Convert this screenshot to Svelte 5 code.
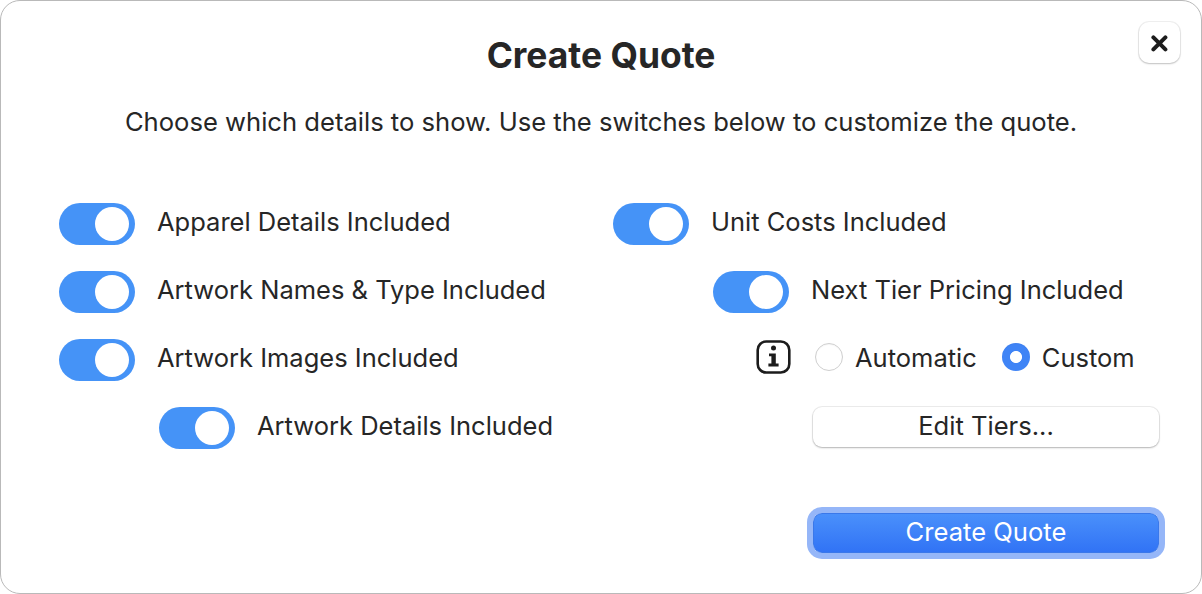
<script>
  const left = [
    { label: "Apparel Details Included" },
    { label: "Artwork Names & Type Included" },
    { label: "Artwork Images Included" },
    { label: "Artwork Details Included", nested: true },
  ];
</script>

{#snippet toggle(label, nested)}
  <div class="row" class:nested>
    <span class="switch"><span class="knob"></span></span>
    <span class="label">{label}</span>
  </div>
{/snippet}

<div class="dialog">
  <button class="close" aria-label="Close">
    <svg width="18" height="18" viewBox="0 0 18 18">
      <path d="M2.4 3.4L14.4 15.4M14.4 3.4L2.4 15.4" stroke="#1c1c1c" stroke-width="4" stroke-linecap="round" />
    </svg>
  </button>

  <h1>Create Quote</h1>
  <p class="intro">Choose which details to show. Use the switches below to customize the quote.</p>

  <div class="columns">
    <div class="col">
      {#each left as item}
        {@render toggle(item.label, item.nested)}
      {/each}
    </div>

    <div class="col">
      {@render toggle("Unit Costs Included", false)}
      {@render toggle("Next Tier Pricing Included", true)}
      <div class="row radios">
        <svg class="info" width="36" height="36" viewBox="0 0 36 36">
          <rect x="1.7" y="2.5" width="31.6" height="31" rx="8.5" fill="none" stroke="#1c1c1c" stroke-width="2.6" />
          <circle cx="17.5" cy="9" r="2.5" fill="#1c1c1c" />
          <path d="M13 14.4H19.8V24.6H22.6V27.4H12.4V24.6H15.4V17.2H13Z" fill="#1c1c1c" />
        </svg>
        <span class="radio"></span>
        <span class="label">Automatic</span>
        <span class="radio on"></span>
        <span class="label">Custom</span>
      </div>
      <div class="row tiers">
        <button class="edit">Edit Tiers...</button>
      </div>
    </div>
  </div>

  <div class="footer">
    <button class="primary">Create Quote</button>
  </div>
</div>

<style>
  :global(body) {
    margin: 0;
    background: #fff;
  }

  .dialog {
    position: relative;
    box-sizing: border-box;
    width: 1202px;
    height: 594px;
    padding: 0 42px 0 59px;
    background: #fff;
    border: 1px solid #b9b9b9;
    border-radius: 20px;
    font-family: Inter, sans-serif;
    color: #262626;
    display: flex;
    flex-direction: column;
  }

  h1 {
    margin: 33px 0 0 -17px;
    font-size: 35.4px;
    line-height: 44px;
    font-weight: 700;
    text-align: center;
  }

  .intro {
    margin: 27px 0 0 -17px;
    font-size: 25.6px;
    line-height: 34px;
    text-align: center;
  }

  .close {
    position: absolute;
    top: 21px;
    right: 21px;
    width: 41px;
    height: 41px;
    padding: 0;
    border: none;
    border-radius: 10px;
    background: #fff;
    box-shadow: 0 0 0 1px rgba(0, 0, 0, 0.06), 0 1px 2px rgba(0, 0, 0, 0.2);
    display: flex;
    align-items: center;
    justify-content: center;
  }

  .columns {
    display: grid;
    grid-template-columns: 554px 1fr;
    margin: 64px 0 0 -1px;
  }

  .col {
    display: flex;
    flex-direction: column;
    gap: 26px;
  }

  .row {
    display: flex;
    align-items: center;
    height: 42px;
    gap: 22px;
  }

  .nested {
    padding-left: 100px;
  }

  .label {
    margin-bottom: 4px;
    font-size: 25.5px;
    line-height: 32px;
    white-space: nowrap;
  }

  .switch {
    box-sizing: border-box;
    width: 76px;
    height: 42px;
    padding: 4px 6px;
    border-radius: 21px;
    background: #4593f7;
    display: flex;
    justify-content: flex-end;
  }

  .knob {
    width: 34px;
    height: 34px;
    border-radius: 50%;
    background: #fff;
  }

  .radios {
    height: 36px;
    margin-bottom: 6px;
    padding-left: 143px;
    gap: 0;
  }

  .radios .label {
    margin: 2px 0 0;
  }

  .info {
    margin-right: 23px;
  }

  .radio {
    box-sizing: border-box;
    width: 28px;
    height: 28px;
    border-radius: 50%;
    background: #fff;
    border: 1px solid #cfcfcf;
    box-shadow: inset 0 1px 1px rgba(0, 0, 0, 0.04);
    margin-right: 12px;
  }

  .radio.on {
    margin-left: 25px;
    border: none;
    background: radial-gradient(circle, #fff 0 5.6px, transparent 6.4px), #3f84f6;
  }

  .tiers {
    align-items: flex-start;
    padding-left: 200px;
  }

  .edit {
    width: 346px;
    height: 40px;
    padding: 0 0 3px;
    border: none;
    border-radius: 9px;
    background: #fff;
    box-shadow: 0 0 0 1px rgba(0, 0, 0, 0.07), 0 1px 2px rgba(0, 0, 0, 0.24);
    font: 25.6px/32px Inter, sans-serif;
    color: #262626;
  }

  .footer {
    display: flex;
    justify-content: flex-end;
    margin-top: 64px;
  }

  .primary {
    width: 346px;
    height: 40px;
    padding: 0 0 3px;
    border: 1px solid #3a78ea;
    border-radius: 9px;
    background: linear-gradient(#4a90fb, #3173f5);
    box-shadow: 0 0 0 6px #95b6f8;
    font: 25.6px/32px Inter, sans-serif;
    color: #fff;
  }
</style>
